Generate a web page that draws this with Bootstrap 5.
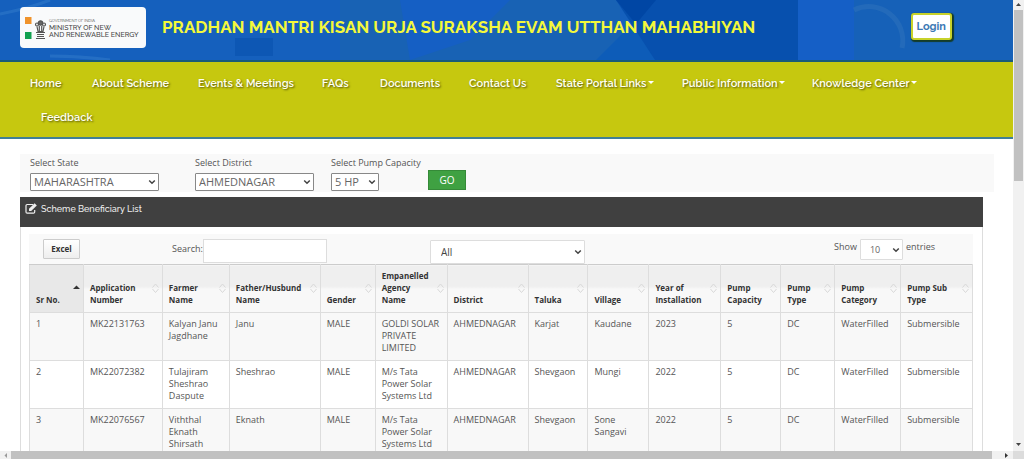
<!DOCTYPE html>
<html lang="en">
<head>
<meta charset="utf-8">
<meta name="viewport" content="width=device-width, initial-scale=1">
<title>PM-KUSUM Scheme Beneficiary List</title>
<link href="https://cdn.jsdelivr.net/npm/bootstrap@5.3.0/dist/css/bootstrap.min.css" rel="stylesheet">
<style>
  body { font-family: "Open Sans", "Noto Sans", sans-serif; font-size: 9px; line-height: 12px; color: #555; background: #fff; }
  .view-body { min-height: 0; }
  .brand-font { font-family: Raleway, Lato, sans-serif; }

  .site-header { height: 62px; padding: 7px 61px 0 20px; background: #1560bd; border-bottom: 2px solid #1a5a78; position: relative; }
  .header-art { position: absolute; inset: 0; width: 100%; height: 100%; }
  .site-logo { width: 126px; height: 41px; padding: 0 4px 0 5px; border-radius: 4px; background: #f9fafb; color: #444; position: relative; white-space: nowrap; }
  .logo-top { font-size: 4px; line-height: 6px; }
  .logo-name { font-size: 7px; line-height: 7px; font-weight: 500; }
  .site-title { font-size: 17px; line-height: 41px; font-weight: 700; color: #f4f83a; position: relative; white-space: nowrap; }
  .login-btn { margin-top: 6px; height: 27px; padding: 0 4px; font-size: 11px; line-height: 23px; font-weight: 700; color: #3c79b5; background: #fff; border: 2px solid #c8d22a; border-radius: 3px; box-shadow: 1px 1px 1px 1px #143c28; position: relative; }

  .site-nav { background: #c6c80f; border-bottom: 2px solid #3f7f96; padding: 5px 0 2px 30px; }
  .nav-grid { display: grid; grid-template-columns: minmax(0,62fr) minmax(0,106fr) minmax(0,124fr) minmax(0,58fr) minmax(0,89fr) minmax(0,87fr) minmax(0,126fr) minmax(0,130fr) minmax(0,201fr); }
  .nav-grid a { display: block; padding: 10px 0; font-size: 11px; line-height: 14px; font-weight: 600; color: #fffff2; text-decoration: none; white-space: nowrap; text-shadow: 1px 1px 2px #55560a; }
  .nav-grid .has-menu::after { content: ""; display: inline-block; margin-left: 1px; vertical-align: 3px; border: 3px solid transparent; border-top-color: #fff; border-bottom: 0; }
  .nav-second { margin-left: 11px; }

  .page-area { padding: 15px 19px 0 20px; }
  .filter-bar { background: #f9f9f9; height: 38px; padding: 2px 10px; }
  .filter-bar label { font-size: 9px; line-height: 14px; margin-bottom: 3px; white-space: nowrap; }
  .filter-field { flex: none; }
  .pick { appearance: none; border: 1px solid #888; border-radius: 1px; color: #666; padding: 0 16px 1px 3px; height: 18px; font-size: 11px; line-height: 15px;
    background: #fff url("data:image/svg+xml,%3Csvg xmlns='http://www.w3.org/2000/svg' viewBox='0 0 8 6'%3E%3Cpath d='M1.2 1.5 4 4.3 6.8 1.5' fill='none' stroke='%23444' stroke-width='1.5'/%3E%3C/svg%3E") no-repeat right 2px center / 8px 6px; }
  .pick-state { width: 129px; }
  .pick-district { width: 119px; }
  .field-state { width: 165px; }
  .field-district { width: 136px; }
  .field-pump { width: 88px; }
  .pick-pump { width: 48px; }
  .go-btn { width: 38px; height: 20px; margin: 14px 0 0 9px; padding: 0; border: 1px solid #358a38; border-radius: 0; background: #3fa142; color: #fff; font-size: 10px; line-height: 18px; }

  .list-panel { margin: 5px 11px 0 0; border: 1px solid #ddd; border-top: 0; }
  .list-title { margin: 0 -1px; background: #404040; color: #eee; height: 30px; padding: 5px; font-size: 9px; line-height: 14px; font-weight: 500; }
  .list-body { padding: 7px 9px 0 8px; }
  .tool-bar { height: 30px; background: #f9f9f9; padding: 0 38px 0 14px; }
  .excel-btn { width: 37px; height: 20px; margin-top: 5px; padding: 0; border: 1px solid #ccc; border-radius: 1px; background: linear-gradient(#fff, #eee); color: #333; font-size: 8px; line-height: 16px; font-weight: 700; }
  .search-group { margin-left: 92px; }
  .search-box { width: 124px; height: 24px; margin-top: 5px; padding: 0 4px; border: 1px solid #ddd; border-radius: 0; background: #fff; font-size: 10px; }
  .pick-all { width: 155px; height: 24px; margin: 6px 0 0 103px; padding-left: 10px; border-color: #ddd; color: #444; font-size: 10px; line-height: 22px; }
  .pick-count { width: 43px; height: 21px; margin: 5px 3px 0 3px; padding-left: 9px; border-color: #ddd; font-size: 9px; line-height: 19px; }

  .data-table { table-layout: fixed; width: 100%; margin: 0; border-collapse: collapse; }
  .data-table th { position: relative; height: 47px; padding: 5px 4px 6px 6px; vertical-align: bottom; font-size: 8px; line-height: 12px; font-weight: 700; color: #333; border: 1px solid #ddd; border-top-color: #ccc; background: linear-gradient(#efefef 45%, #f8f8f8 50%); }
  .data-table th.sorted { background: #e8e8e8; }
  .data-table td { height: 48px; padding: 5px 4px 6px 6px; vertical-align: top; color: #555; border: 1px solid #ddd; }
  .data-table tbody tr:nth-child(odd) { background: #f8f8f8; }
  .sort-mark { position: absolute; right: 3px; top: 18px; width: 7px; height: 10px; }

  .bar-v { width: 11px; background: #f1f1f1; flex: none; }
  .bar-v .thumb { width: 9px; height: 38%; margin-left: 1px; background: #c1c1c1; }
  .bar-h { height: 8px; background: #f1f1f1; flex: none; }
  .bar-h .thumb { background: #c1c1c1; }
  .bar-corner { width: 11px; background: #dcdcdc; }
</style>
</head>
<body>
<div class="vh-100 d-flex flex-column overflow-hidden">
  <div class="view-body d-flex flex-grow-1">
    <div class="flex-grow-1 overflow-hidden">

      <header class="site-header d-flex align-items-start">
        <svg class="header-art" viewBox="0 0 1013 60" preserveAspectRatio="none" aria-hidden="true">
          <path d="M340 0h280v60H340z" fill="#1862b4"/>
          <path d="M400 0h110l-40 40-60 20z" fill="#155fc4"/>
          <path d="M596 60l40-40 20 40z" fill="#0d5cb8"/>
          <path d="M616 0h184v60H655z" fill="#0750ae"/>
          <path d="M616 0h40l-20 24z" fill="#0046a4"/>
          <path d="M798 0h56v60h-56z" fill="#155fc6"/>
          <path d="M854 0h159v60H854z" fill="#1661b8"/>
          <path d="M854 10a34 34 0 0 1 48 38" fill="none" stroke="#2f74bb" stroke-width="5" opacity=".5"/>
          <path d="M0 14Q30 8 50 0M50 56q30 0 60 4" fill="none" stroke="#3d84cf" stroke-width="3" opacity=".4"/>
          <path d="M235 38h38v18h-38z" fill="#0d57b4"/>
        </svg>
        <a href="#" class="site-logo d-flex align-items-center text-decoration-none brand-font">
          <svg width="24" height="26" viewBox="0 0 24 26" aria-hidden="true" class="flex-shrink-0">
            <path d="M0 2h6.500v7H0z" fill="#f0932b"/><path d="M0 17h6.500v7H0z" fill="#12a150"/>
            <g fill="none" stroke="#555" stroke-width="1.2">
              <circle cx="15.500" cy="8" r="2.200" fill="#666"/><circle cx="12" cy="9.500" r="1.500"/><circle cx="19" cy="9.500" r="1.500"/>
              <path d="M12 11.500l1 5h5l1-5M14.300 11v5M16.700 11v5M11 17.500h9M12 19.500h7M12 21.500h7M11 23.500h9"/>
            </g>
          </svg>
          <span class="d-block"><span class="logo-top d-block">GOVERNMENT OF INDIA</span><span class="logo-name d-block">MINISTRY OF NEW</span><span class="logo-name d-block">AND RENEWABLE ENERGY</span></span>
        </a>
        <h1 class="site-title brand-font mb-0 ms-3">PRADHAN MANTRI KISAN URJA SURAKSHA EVAM UTTHAN MAHABHIYAN</h1>
        <button type="button" class="login-btn brand-font ms-auto">Login</button>
      </header>

      <nav class="site-nav brand-font">
        <ul class="nav-grid list-unstyled mb-0">
          <li><a href="#">Home</a></li>
          <li><a href="#">About Scheme</a></li>
          <li><a href="#">Events &amp; Meetings</a></li>
          <li><a href="#">FAQs</a></li>
          <li><a href="#">Documents</a></li>
          <li><a href="#">Contact Us</a></li>
          <li><a href="#" class="has-menu">State Portal Links</a></li>
          <li><a href="#" class="has-menu">Public Information</a></li>
          <li><a href="#" class="has-menu">Knowledge Center</a></li>
          <li class="nav-second"><a href="#">Feedback</a></li>
        </ul>
      </nav>

      <main class="page-area">
        <form class="filter-bar d-flex align-items-start">
          <div class="filter-field field-state"><label class="d-block" for="state">Select State</label><select id="state" class="pick pick-state d-block"><option>MAHARASHTRA</option></select></div>
          <div class="filter-field field-district"><label class="d-block" for="district">Select District</label><select id="district" class="pick pick-district d-block"><option>AHMEDNAGAR</option></select></div>
          <div class="filter-field field-pump"><label class="d-block" for="pump">Select Pump Capacity</label><select id="pump" class="pick pick-pump d-block"><option>5 HP</option></select></div>
          <button type="button" class="go-btn btn">GO</button>
        </form>

        <section class="list-panel">
          <h2 class="list-title brand-font d-flex align-items-start gap-1 mb-0">
            <svg width="12" height="13" viewBox="0 0 12 13" aria-hidden="true"><path d="M8 2.500H2.200a1.200 1.200 0 0 0-1.200 1.200v6.200a1.200 1.200 0 0 0 1.200 1.200h6.300a1.200 1.200 0 0 0 1.200-1.200V8" fill="none" stroke="#eee" stroke-width="1.200"/><path d="M4 9V6.800L9.600 1.200l2.200 2.200L6.200 9z" fill="#eee"/></svg>
            <span>Scheme Beneficiary List</span>
          </h2>
          <div class="list-body">
            <div class="tool-bar d-flex align-items-start">
              <button type="button" class="excel-btn">Excel</button>
              <div class="search-group d-flex align-items-center"><label for="search">Search:</label><input id="search" type="search" class="search-box"></div>
              <select class="pick pick-all" aria-label="Filter"><option>All</option></select>
              <div class="d-flex align-items-center ms-auto"><label for="count">Show</label><select id="count" class="pick pick-count"><option>10</option></select><span>entries</span></div>
            </div>
            <table class="data-table">
              <colgroup>
                <col style="width:5.72%"><col style="width:8.37%"><col style="width:7.1%"><col style="width:9.64%"><col style="width:5.83%"><col style="width:7.63%"><col style="width:8.58%"><col style="width:6.36%"><col style="width:6.46%"><col style="width:7.63%"><col style="width:6.36%"><col style="width:5.72%"><col style="width:6.99%"><col style="width:7.61%">
              </colgroup>
              <thead>
                <tr>
                  <th class="sorted">Sr No.<svg class="sort-mark" viewBox="0 0 7 10"><path d="M0 6l3.500-3.500L7 6z" fill="#333"/></svg></th>
                  <th>Application Number</th><th>Farmer<br>Name</th><th>Father/Husbund Name</th><th>Gender</th><th>Empanelled<br>Agency<br>Name</th><th>District</th><th>Taluka</th><th>Village</th><th>Year of Installation</th><th>Pump Capacity</th><th>Pump<br>Type</th><th>Pump Category</th><th>Pump Sub Type</th>
                </tr>
              </thead>
              <tbody>
                <tr><td>1</td><td>MK22131763</td><td>Kalyan Janu Jagdhane</td><td>Janu</td><td>MALE</td><td>GOLDI SOLAR PRIVATE LIMITED</td><td>AHMEDNAGAR</td><td>Karjat</td><td>Kaudane</td><td>2023</td><td>5</td><td>DC</td><td>WaterFilled</td><td>Submersible</td></tr>
                <tr><td>2</td><td>MK22072382</td><td>Tulajiram Sheshrao Daspute</td><td>Sheshrao</td><td>MALE</td><td>M/s Tata Power Solar Systems Ltd</td><td>AHMEDNAGAR</td><td>Shevgaon</td><td>Mungi</td><td>2022</td><td>5</td><td>DC</td><td>WaterFilled</td><td>Submersible</td></tr>
                <tr><td>3</td><td>MK22076567</td><td>Viththal Eknath Shirsath</td><td>Eknath</td><td>MALE</td><td>M/s Tata Power Solar Systems Ltd</td><td>AHMEDNAGAR</td><td>Shevgaon</td><td>Sone Sangavi</td><td>2022</td><td>5</td><td>DC</td><td>WaterFilled</td><td>Submersible</td></tr>
              </tbody>
            </table>
          </div>
        </section>
      </main>
    </div>

    <div class="bar-v d-flex flex-column" aria-hidden="true">
      <svg width="11" height="10" viewBox="0 0 11 10"><path d="M3 6l2.500-3L8 6z" fill="#444"/></svg>
      <div class="thumb"></div>
      <svg class="mt-auto" width="11" height="12" viewBox="0 0 11 12"><path d="M3 4l2.500 3L8 4z" fill="#444"/></svg>
    </div>
  </div>
  <div class="bar-h d-flex" aria-hidden="true">
    <svg width="11" height="8" viewBox="0 0 11 8"><path d="M7 2L4.500 4.500 7 7z" fill="#999"/></svg>
    <div class="thumb flex-grow-1 me-2"></div>
    <svg width="13" height="8" viewBox="0 0 13 8"><path d="M5 2l3 2.500L5 7z" fill="#333"/></svg>
    <div class="bar-corner"></div>
  </div>
</div>
<script src="https://cdn.jsdelivr.net/npm/bootstrap@5.3.0/dist/js/bootstrap.bundle.min.js"></script>
<script>
  // Unsorted columns carry a faint two-way arrow.
  document.querySelectorAll('.data-table th:not(.sorted)').forEach(function (th) {
    th.insertAdjacentHTML('beforeend', '<svg class="sort-mark" viewBox="0 0 7 10"><path d="M.5 4.500l3-3.500 3 3.500M.5 6l3 3.500 3-3.500" fill="none" stroke="#d8d8d8"/></svg>');
  });
</script>
</body>
</html>
